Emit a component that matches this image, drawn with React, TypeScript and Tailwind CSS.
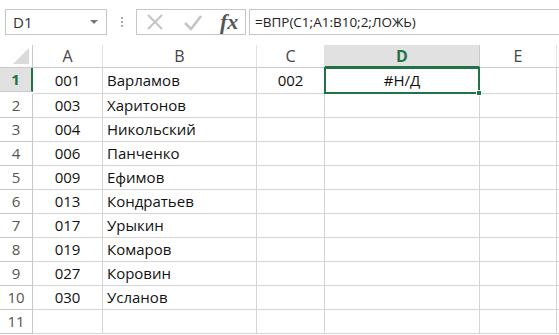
import React from 'react';

const rows: [string, string, string, string][] = [
  ['001', 'Варламов', '002', '#Н/Д'],
  ['003', 'Харитонов', '', ''],
  ['004', 'Никольский', '', ''],
  ['006', 'Панченко', '', ''],
  ['009', 'Ефимов', '', ''],
  ['013', 'Кондратьев', '', ''],
  ['017', 'Урыкин', '', ''],
  ['019', 'Комаров', '', ''],
  ['027', 'Коровин', '', ''],
  ['030', 'Усланов', '', ''],
  ['', '', '', ''],
];

const font = { fontFamily: '"Open Sans", "Noto Sans", sans-serif' };

function Toolbar() {
  return (
    <div className="flex h-[45px] items-start pt-[9px]">
      <div className="ml-[5px] flex h-[26px] w-[102px] items-center justify-between border border-[#c6c6c6] pl-[7px] pr-[8px] text-[15px] text-[#333]">
        <span>D1</span>
        <span className="h-0 w-0 border-x-[4px] border-t-[4px] border-x-transparent border-t-[#777]" />
      </div>
      <div className="ml-[14px] mt-[8px] flex flex-col gap-[2px]">
        <span className="h-[2px] w-[2px] bg-[#aaa]" />
        <span className="h-[2px] w-[2px] bg-[#aaa]" />
        <span className="h-[2px] w-[2px] bg-[#aaa]" />
      </div>
      <div className="ml-[13px] flex h-[26px] w-[110px] items-center border border-[#c6c6c6]">
        <svg width="18" height="18" viewBox="0 0 18 18" className="ml-[9px]">
          <path d="M2 2 L16 16 M16 2 L2 16" stroke="#c4c4c4" strokeWidth="2" />
        </svg>
        <svg width="20" height="18" viewBox="0 0 20 18" className="ml-[19px]">
          <path d="M2 10 L8 16 L18 3" stroke="#c4c4c4" strokeWidth="2.6" fill="none" />
        </svg>
        <span className="ml-[17px] text-[22px] font-bold italic leading-none text-[#555]" style={{ fontFamily: '"Liberation Serif", serif' }}>
          fx
        </span>
      </div>
      <div className="ml-[3px] flex h-[26px] flex-1 items-center border-y border-l border-[#c6c6c6] pl-[5px] text-[13.5px] text-[#222]">
        =ВПР(C1;A1:B10;2;ЛОЖЬ)
      </div>
    </div>
  );
}

export default function App() {
  const cols = ['A', 'B', 'C', 'D', 'E'];
  return (
    <div className="h-[335px] w-[559px] overflow-hidden bg-white" style={font}>
      <Toolbar />
      <div className="grid grid-cols-[33px_70px_154px_68px_155px_77px_1fr] grid-rows-[23px]">
        <div className="relative border-r border-b border-[#c9c9c9]">
          <div className="absolute right-[3px] bottom-[3px] h-0 w-0 border-b-[16px] border-l-[16px] border-b-[#dadada] border-l-transparent" />
        </div>
        {cols.map((c) => (
          <div
            key={c}
            className={
              c === 'D'
                ? 'flex items-center justify-center border-r border-b-2 border-r-[#c9c9c9] border-b-[#217346] bg-[#e1e1e1] text-[16px] font-bold text-[#217346]'
                : 'flex items-center justify-center border-r border-b border-r-[#e2e2e2] border-b-[#c9c9c9] text-[16px] text-[#444]'
            }
          >
            {c}
          </div>
        ))}
        <div className="border-b border-[#c9c9c9]" />
        {rows.map((r, i) => (
          <React.Fragment key={i}>
            <div
              className={
                i === 0
                  ? 'flex h-[24px] items-center justify-center border-r-2 border-b border-r-[#217346] border-b-[#c9c9c9] bg-[#e1e1e1] text-[15px] font-bold text-[#217346]'
                  : 'flex h-[24px] items-center justify-center border-r border-b border-[#c9c9c9] text-[15px] text-[#555]'
              }
            >
              {i + 1}
            </div>
            <div className="flex items-center justify-center border-r border-b border-[#d4d4d4] text-[15px] text-[#111]">{r[0]}</div>
            <div className="flex items-center border-r border-b border-[#d4d4d4] pl-[4px] text-[15px] text-[#111]">{r[1]}</div>
            <div className="flex items-center justify-center border-r border-b border-[#d4d4d4] text-[15px] text-[#111]">{r[2]}</div>
            {i === 0 ? (
              <div className="relative -mt-px -ml-px flex items-center justify-center border-2 border-[#217346] text-[15px] text-[#111]">
                {r[3]}
                <span className="absolute -right-[4px] -bottom-[4px] h-[6px] w-[6px] border border-white bg-[#217346]" />
              </div>
            ) : (
              <div className="border-r border-b border-[#d4d4d4]" />
            )}
            <div className="border-r border-b border-[#d4d4d4]" />
            <div className="border-b border-[#d4d4d4]" />
          </React.Fragment>
        ))}
      </div>
    </div>
  );
}
